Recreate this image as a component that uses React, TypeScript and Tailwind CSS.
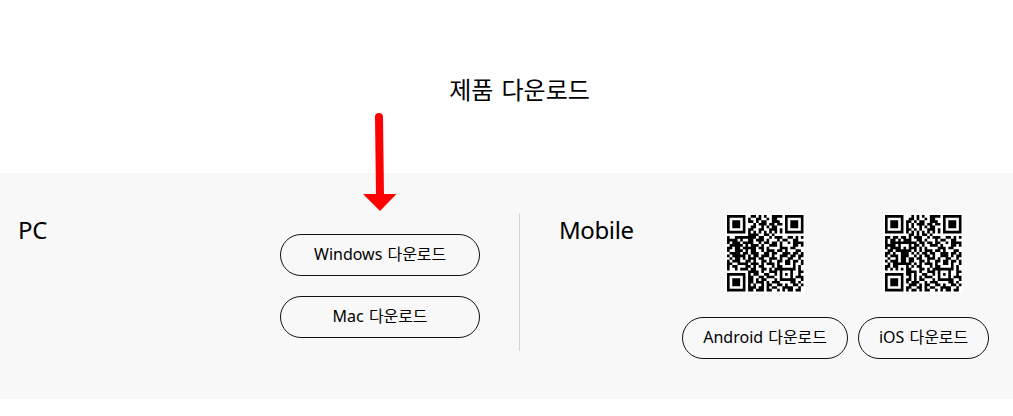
const androidRows = [
  '#######..##.#.#..####.#######',
  '#.....#.#..##..#.##...#.....#',
  '#.###.#.##.#.##..###..#.###.#',
  '#.###.#...#.###.##.##.#.###.#',
  '#.###.#..##..#.#.##...#.###.#',
  '#.....#.##..##..###.#.#.....#',
  '#######.#.#.#.#.#.#.#.#######',
  '........####..##.#...........',
  '#..########.##..#.###..##.#.#',
  '####.#..##.###.#...#.##..##..',
  '#.###.####..#.##.##.#..#.####',
  '.#####.#.###.#..###.#....##.#',
  '##.##.#####.##.#....###.##...',
  '#..###.#.##..#.###.##.#...##.',
  '.####.##.###..##.##..###.##.#',
  '#.#####.#.##.###.#..###.##.##',
  '.#.##.#.###.##..###.#..##..#.',
  '#.###..##.#..##.#..##.##.##.#',
  '##..####.###.#.###.#..##.#..#',
  '#.##...##.#.##...#.##....#.#.',
  '#..#.###.##..##.#.########.#.',
  '........####.#..###.#...#..##',
  '#######.#.##..##..#.#.#.#..#.',
  '#.....#.##..##.###..#...#.###',
  '#.###.#.##.#.##...#.######..#',
  '#.###.#.##.###.#.###....##.#.',
  '#.###.#.#.#..#.##..##.#..##.#',
  '#.....#.###.##.#.##..####..#.',
  '#######.##.###.##..#.#.##.##.',
];

const iosRows = [
  '#######...#.#.#..####.#######',
  '#.....#..##.#..#.##...#.....#',
  '#.###.#.##.#.##..###..#.###.#',
  '#.###.#.#.#.###.##.##.#.###.#',
  '#.###.#.#.#..#.#.##...#.###.#',
  '#.....#.##.#.#..###.#.#.....#',
  '#######.#.#.#.#.#.#.#.#######',
  '.........##.#.##.#...........',
  '##.##.##.#.###..#.###..##.#.#',
  '#.##.#.###..##.#...#.##..##..',
  '#.##########.##.##.##..#.####',
  '####.#...#.##.#..###.#...##.#',
  '#.####.#.###.#.#....###.##...',
  '.##.######.#.#.###.##.#...##.',
  '##.#..###.#.#.##.##..###.##.#',
  '#.###.###..#.#.##.#..###.#.##',
  '.#..#.##.##.##..###.#..##..#.',
  '#.###.##.##..##.#..##.##.##.#',
  '.#.#######.#.#.###.#..##.#..#',
  '##.##...#.#.##...#.##....#.#.',
  '#.#.#.#.##...##.#.########.#.',
  '........####.#..###.#...#..##',
  '#######.##.#..##..#.#.#.#..#.',
  '#.....#..#.#.#.###..#...#.###',
  '#.###.#.##.#.##...#.######..#',
  '#.###.#.#.###..#.###....##.#.',
  '#.###.#..###.#.##..##.#..##.#',
  '#.....#.##..##.#.##..####..#.',
  '#######.#.##.#.##..#.#.##.##.',
];

function QrCode({ rows, label }: { rows: string[]; label: string }) {
  const path = rows
    .map((row, y) =>
      row
        .split('')
        .map((cell, x) => (cell === '#' ? `M${x} ${y}h1v1h-1z` : ''))
        .join('')
    )
    .join('');

  return (
    <div className="size-20 bg-white p-0.5">
      <svg role="img" aria-label={label} viewBox="0 0 29 29" className="size-[76.5px]">
        <path d={path} fill="#000" />
      </svg>
    </div>
  );
}

function DownloadButton({ name, className }: { name: string; className: string }) {
  return (
    <button
      className={`h-[42px] shrink-0 cursor-pointer whitespace-nowrap rounded-full border border-[#111] pb-[3px] text-[16px] leading-none [word-spacing:1px] ${className}`}
    >
      <span className="font-[450]">{name}</span> <span className="tracking-[-0.1px]">다운로드</span>
    </button>
  );
}

export default function App() {
  return (
    <main className="h-[416px] w-[1013px] overflow-hidden bg-white font-['Noto_Sans','Noto_Sans_CJK_KR',sans-serif] text-black">
      <header className="relative flex h-[173px] justify-center pt-[72px] pl-[26px]">
        <h1 className="text-[24px] leading-9 font-normal [word-spacing:2px]">제품 다운로드</h1>

        {/* Arrow pointing to the Windows button */}
        <svg className="absolute top-[110px] left-[360px] z-10" width="40" height="104" viewBox="0 0 40 104" fill="none">
          <path d="M19 7 20 86" stroke="#f00" strokeWidth="8" strokeLinecap="round" />
          <path d="M3 84h33.5L20 101z" fill="#f00" />
        </svg>
      </header>

      <div className="flex h-[226px] bg-[#f8f8f8] pt-10">
        <section className="flex h-[138px] w-[520px] justify-between border-r border-[#d5d5d5] pr-[39px] pl-[18px]">
          <h2 className="text-[24px] leading-[34px] font-[450] tracking-[-0.3px]">PC</h2>
          <div className="flex flex-col gap-5 pt-[21px]">
            <DownloadButton name="Windows" className="w-[200px]" />
            <DownloadButton name="Mac" className="w-[200px]" />
          </div>
        </section>

        <section className="flex pl-[39px]">
          <h2 className="w-[123px] text-[24px] leading-[34px] font-[450] tracking-[-0.4px]">Mobile</h2>
          <div className="flex gap-2.5">
            <div className="flex flex-col items-center gap-6">
              <QrCode rows={androidRows} label="Android" />
              <DownloadButton name="Android" className="w-[166px]" />
            </div>
            <div className="flex flex-col items-start gap-6">
              <div className="pl-[25px]">
                <QrCode rows={iosRows} label="iOS" />
              </div>
              <DownloadButton name="iOS" className="w-[131px]" />
            </div>
          </div>
        </section>
      </div>
    </main>
  );
}
